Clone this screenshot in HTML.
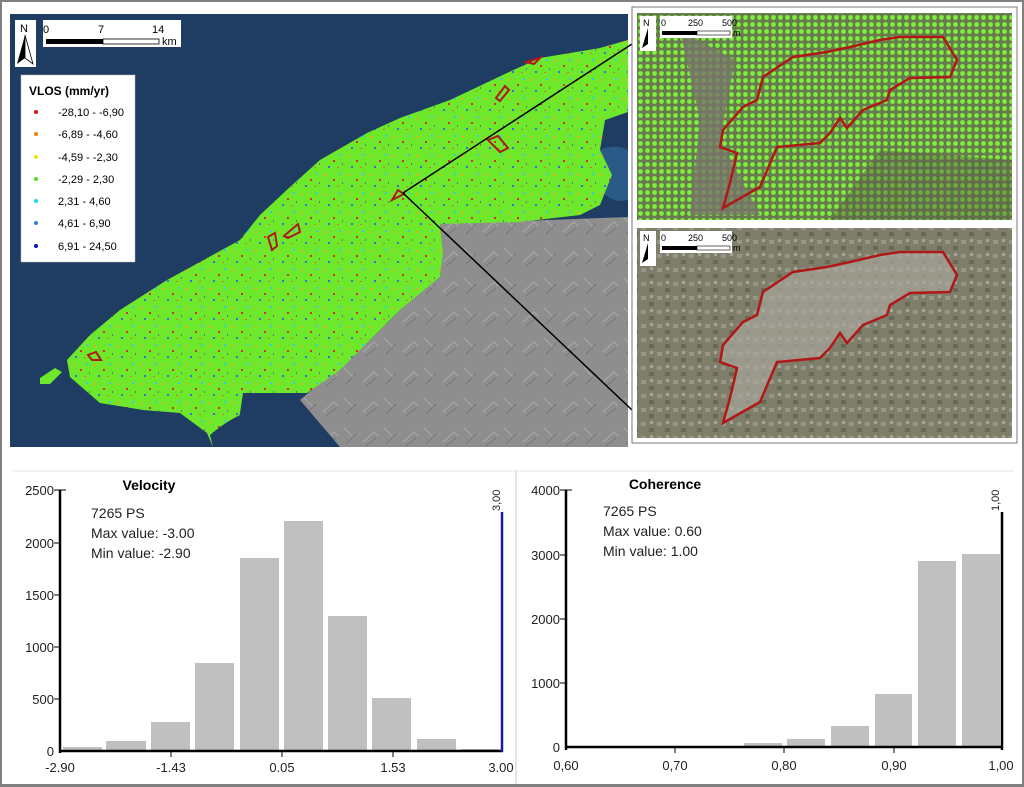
<!DOCTYPE html>
<html><head><meta charset="utf-8"><style>
html,body{margin:0;padding:0;background:#fff;}
svg{display:block;}
text{font-family:"Liberation Sans",sans-serif;}
</style></head><body>
<svg width="1024" height="787" viewBox="0 0 1024 787" xmlns="http://www.w3.org/2000/svg">
<defs>
<pattern id="speck" width="23" height="19" patternUnits="userSpaceOnUse">
<rect width="23" height="19" fill="#6ee82a"/>
<rect x="2" y="3" width="2" height="2" fill="#e0b020"/>
<rect x="11" y="8" width="2" height="2" fill="#d8302a"/>
<rect x="17" y="2" width="2" height="2" fill="#40c8e0"/>
<rect x="6" y="14" width="2" height="2" fill="#3a70d8"/>
<rect x="15" y="15" width="2" height="1" fill="#e07020"/>
<rect x="20" y="11" width="1" height="2" fill="#707070"/>
</pattern>
<pattern id="dots" width="7" height="7" patternUnits="userSpaceOnUse">
<rect width="7" height="7" fill="#6a7a50"/>
<circle cx="3.5" cy="3.5" r="2.4" fill="#7cf03a"/>
</pattern>
<pattern id="sat" width="16" height="14" patternUnits="userSpaceOnUse">
<rect width="16" height="14" fill="#7e7e6a"/>
<rect x="1" y="2" width="5" height="4" fill="#989486"/>
<rect x="9" y="8" width="5" height="4" fill="#666a52"/>
<rect x="10" y="1" width="3" height="3" fill="#a8a49a"/>
</pattern>
<pattern id="hill" width="40" height="30" patternUnits="userSpaceOnUse">
<rect width="40" height="30" fill="#8e8e8e"/>
<path d="M3 22 L14 12 L18 16 M24 8 L34 18" stroke="#a6a6a6" stroke-width="1.2" fill="none"/>
<path d="M6 26 L16 18 M26 24 L36 14" stroke="#767676" stroke-width="1" fill="none"/>
</pattern>
</defs>
<rect x="1" y="1" width="1022" height="785" fill="#fff" stroke="#808080" stroke-width="2"/>

<!-- MAP -->
<rect x="10" y="14" width="618" height="433" fill="#1f3d63"/>
<polygon points="440,224 628,217 628,447 340,447 300,400 367,343 400,310 440,277 443,253" fill="url(#hill)"/>
<path d="M582 160 Q610 140 628 150 L628 200 Q605 205 598 180 Z" fill="#2a5a88"/>
<polygon points="628,40 600,48 540,58 507,73 450,100 400,118 367,133 320,160 290,187 260,215 240,240 200,262 167,280 120,310 90,335 67,360 70,377 100,403 143,410 180,413 207,433 213,447 235,447 243,393 283,393 307,393 340,370 367,343 400,310 440,277 443,253 440,224 520,222 580,215 600,205 612,175 600,150 605,120 628,112" fill="url(#speck)"/>
<polygon points="40,378 55,368 62,372 50,384 40,384" fill="#6ee82a"/>
<path d="M210 435 Q250 400 300 405 L310 447 L213 447 Z" fill="#1f3d63"/>
<g fill="none" stroke="#b01818" stroke-width="2">
<path d="M496 98 L505 86 L509 90 L500 101 Z"/>
<path d="M488 140 L498 136 L508 148 L500 152 Z"/>
<path d="M392 200 L398 190 L404 194 Z"/>
<path d="M268 237 L275 233 L277 246 L272 250 Z"/>
<path d="M284 236 L298 224 L300 232 L288 238 Z"/>
<path d="M88 355 L96 352 L101 360 L92 360 Z"/>
<path d="M526 62 L540 58 L534 64 Z"/>
</g>
<line x1="403" y1="193" x2="632" y2="44" stroke="#000" stroke-width="1.5"/>
<line x1="403" y1="193" x2="632" y2="410" stroke="#000" stroke-width="1.5"/>
<rect x="15" y="20" width="21" height="47" fill="#fff"/>
<text x="20" y="32" font-size="11">N</text>
<path d="M25 35 L17 64 L25 58 Z" fill="#000"/><path d="M25 35 L33 64 L25 58 Z" fill="#fff" stroke="#000" stroke-width="0.8"/>
<rect x="43" y="20" width="138" height="27" fill="#fff"/>
<text x="43" y="33" font-size="11">0</text><text x="98" y="33" font-size="11">7</text><text x="152" y="33" font-size="11">14</text>
<rect x="46" y="39" width="57" height="5" fill="#000"/><rect x="103" y="39" width="56" height="5" fill="#fff" stroke="#000" stroke-width="0.8"/>
<text x="162" y="45" font-size="11">km</text>
<rect x="21" y="75" width="114" height="187" fill="#fff" stroke="#bbb" stroke-width="0.5"/>
<text x="29" y="95" font-size="12" font-weight="bold">VLOS (mm/yr)</text>
<g font-size="11">
<circle cx="36" cy="112" r="2" fill="#e01010"/><text x="58" y="116">-28,10 - -6,90</text>
<circle cx="36" cy="134" r="2" fill="#f08010"/><text x="58" y="138">-6,89 - -4,60</text>
<circle cx="36" cy="157" r="2" fill="#f0e010"/><text x="58" y="161">-4,59 - -2,30</text>
<circle cx="36" cy="179" r="2" fill="#50e020"/><text x="58" y="183">-2,29 - 2,30</text>
<circle cx="36" cy="201" r="2" fill="#10e0f0"/><text x="58" y="205">2,31 - 4,60</text>
<circle cx="36" cy="223" r="2" fill="#3080e0"/><text x="58" y="227">4,61 - 6,90</text>
<circle cx="36" cy="246" r="2" fill="#1010c0"/><text x="58" y="250">6,91 - 24,50</text>
</g>

<!-- INSETS -->
<rect x="632" y="7" width="385" height="436" fill="#fff" stroke="#777" stroke-width="1"/>
<rect x="637" y="13" width="375" height="207" fill="url(#dots)"/>
<path d="M680 30 L700 120 L690 215 L760 215 L720 140 L735 60 Z" fill="#77746a" opacity="0.8"/>
<path d="M880 150 L1012 160 L1012 220 L830 220 Z" fill="#5a5a48" opacity="0.45"/>
<path d="M723,208 L730,183 L737,153 L720,147 L723,130 L743,107 L757,100 L763,77 L793,57 L827,52 L850,47 L880,40 L900,37 L943,37 L957,60 L950,77 L910,78 L890,90 L887,100 L863,110 L847,128 L840,118 L830,133 L820,143 L777,147 L760,187 Z" fill="none" stroke="#b01818" stroke-width="2.5"/>
<rect x="640" y="16" width="16" height="35" fill="#fff"/>
<text x="643" y="26" font-size="9">N</text><path d="M648 28 L642 48 L648 44 Z" fill="#000"/>
<rect x="660" y="16" width="72" height="22" fill="#fff"/>
<text x="661" y="26" font-size="9">0</text><text x="688" y="26" font-size="9">250</text><text x="722" y="26" font-size="9">500</text>
<rect x="662" y="31" width="35" height="4" fill="#000"/><rect x="697" y="31" width="33" height="4" fill="#fff" stroke="#000" stroke-width="0.6"/>
<text x="733" y="36" font-size="9">m</text>

<rect x="637" y="228" width="375" height="210" fill="url(#sat)"/>
<path d="M723,423 L730,398 L737,368 L720,362 L723,345 L743,322 L757,315 L763,292 L793,272 L827,267 L850,262 L880,255 L900,252 L943,252 L957,275 L950,292 L910,293 L890,305 L887,315 L863,325 L847,343 L840,333 L830,348 L820,358 L777,362 L760,402 Z" fill="#aaa69c" opacity="0.7"/>
<path d="M723,423 L730,398 L737,368 L720,362 L723,345 L743,322 L757,315 L763,292 L793,272 L827,267 L850,262 L880,255 L900,252 L943,252 L957,275 L950,292 L910,293 L890,305 L887,315 L863,325 L847,343 L840,333 L830,348 L820,358 L777,362 L760,402 Z" fill="none" stroke="#b01818" stroke-width="2.5"/>
<rect x="640" y="231" width="16" height="35" fill="#fff"/>
<text x="643" y="241" font-size="9">N</text><path d="M648 243 L642 263 L648 259 Z" fill="#000"/>
<rect x="660" y="231" width="72" height="22" fill="#fff"/>
<text x="661" y="241" font-size="9">0</text><text x="688" y="241" font-size="9">250</text><text x="722" y="241" font-size="9">500</text>
<rect x="662" y="246" width="35" height="4" fill="#000"/><rect x="697" y="246" width="33" height="4" fill="#fff" stroke="#000" stroke-width="0.6"/>
<text x="733" y="251" font-size="9">m</text>

<line x1="12" y1="471" x2="1014" y2="471" stroke="#e4e4e4" stroke-width="1"/>
<line x1="516" y1="471" x2="516" y2="785" stroke="#c8c8c8" stroke-width="1"/>
<line x1="2" y1="785" x2="1022" y2="785" stroke="#808080" stroke-width="2"/>

<g fill="#c0c0c0">
<rect x="63" y="747" width="39" height="4"/>
<rect x="106" y="741" width="40" height="10"/>
<rect x="151" y="722" width="39" height="29"/>
<rect x="195" y="663" width="39" height="88"/>
<rect x="240" y="558" width="39" height="193"/>
<rect x="284" y="521" width="39" height="230"/>
<rect x="328" y="616" width="39" height="135"/>
<rect x="372" y="698" width="39" height="53"/>
<rect x="417" y="739" width="39" height="12"/>
<rect x="461" y="749" width="38" height="2"/>
</g>
<g stroke="#000" stroke-width="2.5"><line x1="60" y1="490" x2="60" y2="753"/><line x1="59" y1="751" x2="503" y2="751"/></g>
<line x1="502" y1="512" x2="502" y2="752" stroke="#1a1aa0" stroke-width="2.5"/>
<g stroke="#000" stroke-width="1"><line x1="54" y1="490" x2="66" y2="490"/><line x1="54" y1="543" x2="60" y2="543"/><line x1="54" y1="595" x2="60" y2="595"/><line x1="54" y1="647" x2="60" y2="647"/><line x1="54" y1="699" x2="60" y2="699"/><line x1="171" y1="751" x2="171" y2="757"/><line x1="282" y1="751" x2="282" y2="757"/><line x1="393" y1="751" x2="393" y2="757"/></g>
<g font-size="13" fill="#222" text-anchor="end"><text x="54" y="495">2500</text><text x="54" y="548">2000</text><text x="54" y="600">1500</text><text x="54" y="652">1000</text><text x="54" y="704">500</text><text x="54" y="756">0</text></g>
<g font-size="13" fill="#222" text-anchor="middle"><text x="60" y="772">-2.90</text><text x="171" y="772">-1.43</text><text x="282" y="772">0.05</text><text x="393" y="772">1.53</text><text x="501" y="772">3.00</text></g>
<text x="0" y="0" font-size="11" fill="#222" transform="translate(500,511) rotate(-90)">3,00</text>
<text x="149" y="490" font-size="14" font-weight="bold" text-anchor="middle">Velocity</text>
<g font-size="14" fill="#222"><text x="91" y="518">7265 PS</text><text x="91" y="538">Max value: -3.00</text><text x="91" y="558">Min value: -2.90</text></g>

<g fill="#c0c0c0">
<rect x="566" y="746" width="41" height="1"/>
<rect x="699" y="746" width="38" height="1"/>
<rect x="744" y="743" width="38" height="4"/>
<rect x="787" y="739" width="38" height="8"/>
<rect x="831" y="726" width="38" height="21"/>
<rect x="875" y="694" width="37" height="53"/>
<rect x="918" y="561" width="38" height="186"/>
<rect x="962" y="554" width="38" height="193"/>
</g>
<g stroke="#000" stroke-width="2.5"><line x1="566" y1="490" x2="566" y2="750"/><line x1="565" y1="747" x2="1003" y2="747"/><line x1="1002" y1="512" x2="1002" y2="750"/></g>
<g stroke="#000" stroke-width="1"><line x1="560" y1="490" x2="572" y2="490"/><line x1="560" y1="555" x2="566" y2="555"/><line x1="560" y1="619" x2="566" y2="619"/><line x1="560" y1="683" x2="566" y2="683"/><line x1="675" y1="747" x2="675" y2="753"/><line x1="784" y1="747" x2="784" y2="753"/><line x1="894" y1="747" x2="894" y2="753"/></g>
<g font-size="13" fill="#222" text-anchor="end"><text x="560" y="495">4000</text><text x="560" y="560">3000</text><text x="560" y="624">2000</text><text x="560" y="688">1000</text><text x="560" y="752">0</text></g>
<g font-size="13" fill="#222" text-anchor="middle"><text x="566" y="770">0,60</text><text x="675" y="770">0,70</text><text x="784" y="770">0,80</text><text x="894" y="770">0,90</text><text x="1001" y="770">1,00</text></g>
<text x="0" y="0" font-size="11" fill="#222" transform="translate(999,511) rotate(-90)">1,00</text>
<text x="665" y="489" font-size="14" font-weight="bold" text-anchor="middle">Coherence</text>
<g font-size="14" fill="#222"><text x="603" y="516">7265 PS</text><text x="603" y="536">Max value: 0.60</text><text x="603" y="556">Min value: 1.00</text></g>
</svg>
</body></html>
